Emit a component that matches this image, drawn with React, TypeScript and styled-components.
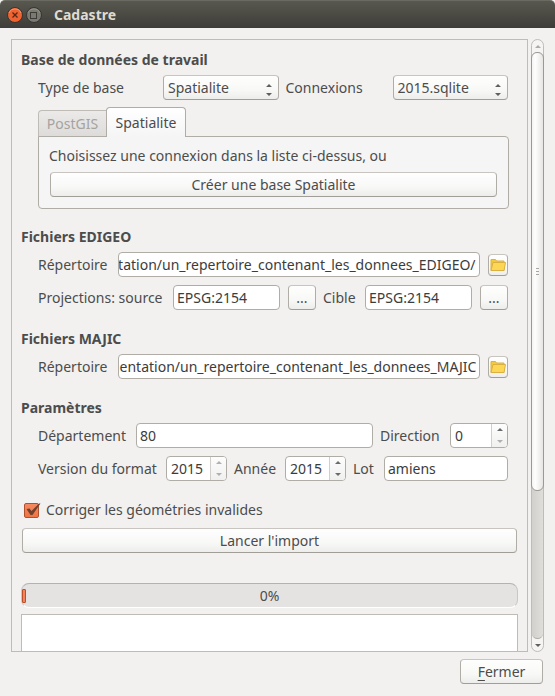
import React, { useEffect, useRef, useState } from "react";
import styled, { createGlobalStyle, css } from "styled-components";

const ink = "#4c4c4c";
const line = "#b0aca6";
const softLine = "#bfbcb8";

const GlobalStyle = createGlobalStyle`
  *, *::before, *::after { box-sizing: border-box; }
  body { margin: 0; background: #f2f1f0; }
  body, button, input, select, textarea {
    font-family: "Noto Sans", "Open Sans", sans-serif;
    font-size: 14px;
    line-height: 20px;
    color: ${ink};
  }
`;

const Window = styled.div`
  display: flex;
  flex-direction: column;
  height: 100vh;
  background: #f2f1f0;
`;

const TitleBar = styled.header`
  display: flex;
  align-items: center;
  flex: none;
  gap: 3px;
  height: 28px;
  padding: 0 7px;
  border-top: 1px solid #6b6a62;
  border-radius: 5px 5px 0 0;
  background: linear-gradient(#59584f, #3d3c38);
`;

const Title = styled.h1`
  margin: 0 0 0 9px;
  font-size: 14px;
  line-height: 20px;
  font-weight: 700;
  color: #dfdbd2;
`;

const WindowButton = styled.button`
  width: 16px;
  height: 16px;
  padding: 0;
  border: 0;
  background: none;
  svg { display: block; }
`;

const Body = styled.main`
  display: flex;
  flex: 1;
  min-height: 0;
  gap: 3px;
  padding: 11px 11px 0;
`;

const Pane = styled.div`
  flex: 1;
  min-width: 0;
  padding: 10px 9px 0;
  border: 1px solid ${softLine};
  overflow-y: auto;
  scrollbar-width: none;
`;

const Section = styled.section`
  margin-bottom: 19px;
`;

const Heading = styled.h2`
  margin: 0 0 5px;
  font-size: 14px;
  line-height: 20px;
  font-weight: 700;
`;

const Rows = styled.div`
  display: flex;
  flex-direction: column;
  gap: 8px;
  margin: 0 10px 0 17px;
`;

const Row = styled.div`
  display: flex;
  align-items: center;
  height: 25px;
`;

const Label = styled.label<{ $w: number; $gap?: boolean }>`
  flex: none;
  width: ${(p) => p.$w}px;
  margin-left: ${(p) => (p.$gap ? "7px" : "0")};
  white-space: nowrap;
`;

const field = css`
  height: 25px;
  min-width: 0;
  border: 1px solid ${line};
  border-radius: 4px;
  background: #fff;
  outline: none;
`;

const raised = css`
  border: 1px solid;
  border-color: #c8c4bf #b0aca6 #a19d97;
  border-radius: 4px;
  background: linear-gradient(#fefefe, #f8f8f7 60%, #ededec);
`;

const TextInput = styled.input<{ $end?: boolean }>`
  ${field}
  flex: 1;
  width: 0;
  padding: ${(p) => (p.$end ? "0 3px 0 0" : "0 3px")};
  margin-right: ${(p) => (p.$end ? "8px" : "0")};
  color: #3c3c3c;
`;

const Button = styled.button<{ $w?: number }>`
  ${raised}
  display: block;
  height: 25px;
  padding: 0;
  width: ${(p) => (p.$w ? `${p.$w}px` : "100%")};
  flex: none;
  line-height: 22px;
  white-space: nowrap;
  u { text-underline-offset: 3px; }
`;

const MoreButton = styled(Button)`
  width: 28px;
  margin: 0 7px 0 8px;
  &:last-child { margin-right: 0; }
`;

const FolderButton = styled(Button)`
  display: grid;
  place-items: center;
  width: 20px;
  height: 22px;
`;

const SelectBox = styled.div`
  position: relative;
  flex: 1;
  margin-right: 7px;
  &:last-child { margin-right: 0; }
  svg {
    position: absolute;
    right: 6px;
    top: 8px;
    pointer-events: none;
  }
`;

const Select = styled.select`
  ${raised}
  display: block;
  appearance: none;
  width: 100%;
  height: 25px;
  padding: 0 18px 0 4px;
  outline: none;
`;

const Tabs = styled.div`
  margin: 7px 9px -1px 17px;
`;

const TabList = styled.div`
  display: flex;
  align-items: flex-end;
  height: 30px;
  margin-bottom: -1px;
`;

const Tab = styled.button<{ $active?: boolean }>`
  position: relative;
  padding: 0;
  border: 1px solid ${line};
  ${(p) =>
    p.$active
      ? css`
          width: 80px;
          height: 30px;
          border-bottom: 0;
          border-radius: 4px 4px 0 0;
          background: linear-gradient(#ffffff, #f5f5f5);
        `
      : css`
          width: 69px;
          height: 27px;
          margin-right: -1px;
          border-color: ${softLine} ${softLine} ${line};
          border-radius: 4px 0 0 0;
          background: linear-gradient(#ebeae9, #dddcda);
          color: #a5a3a0;
        `}
`;

const TabPanel = styled.div`
  padding: 9px 11px 11px 10px;
  border: 1px solid ${line};
  border-radius: 0 4px 4px 4px;
  background: #f5f5f5;
`;

const Note = styled.p`
  margin: 0 0 6px;
`;

const SpinBox = styled.div<{ $w: number }>`
  ${field}
  display: flex;
  flex: none;
  width: ${(p) => p.$w}px;
  margin-right: 7px;
  overflow: hidden;
  &:last-child { margin-right: 0; }
`;

const SpinInput = styled.input`
  flex: 1;
  width: 0;
  min-width: 0;
  padding: 0 0 0 4px;
  border: 0;
  background: none;
  outline: none;
  color: #3c3c3c;
  appearance: textfield;
  &::-webkit-inner-spin-button { appearance: none; }
`;

const SpinButtons = styled.div`
  display: flex;
  flex-direction: column;
  width: 16px;
  border-left: 1px solid #d2cfcb;
  background: linear-gradient(#fdfdfd, #f0f0ef);
`;

const SpinButton = styled.button`
  display: grid;
  place-items: center;
  flex: 1;
  padding: 0;
  border: 0;
  background: none;
  color: #6a6a6a;
  &:disabled { color: #b0b0b0; }
`;

const CheckLabel = styled.label`
  display: flex;
  align-items: center;
  height: 20px;
  margin-bottom: 8px;
`;

const CheckMark = styled.span`
  position: relative;
  width: 25px;
  height: 16px;
  input {
    appearance: none;
    display: block;
    width: 15px;
    height: 15px;
    margin: 1px 0 0 3px;
    border: 1px solid #b0502e;
    border-radius: 2px;
    background: #fff;
  }
  input:checked { background: linear-gradient(#f58a60, #ee7442); }
  svg {
    position: absolute;
    left: 3px;
    top: 0;
    pointer-events: none;
  }
  input:not(:checked) + svg { display: none; }
`;

const Actions = styled.div<{ $after?: number }>`
  margin: 0 0 ${(p) => p.$after ?? 0}px 1px;
`;

const Launch = styled(Actions)`
  margin-right: 1px;
`;

const Progress = styled.div`
  display: grid;
  align-items: center;
  height: 25px;
  margin-bottom: 6px;
  border: 1px solid;
  border-color: #b5b2ae #c9c7c4 #fff;
  border-radius: 8px;
  background: #e4e3e2;
  > * { grid-area: 1 / 1; }
`;

const ProgressChunk = styled.span`
  width: 4px;
  height: 14px;
  border: 1px solid #bd4e28;
  border-radius: 1px;
  background: #f2835a;
`;

const ProgressText = styled.span`
  text-align: center;
`;

const Log = styled.textarea`
  display: block;
  width: 100%;
  height: 232px;
  padding: 4px;
  margin-bottom: 9px;
  border: 1px solid ${softLine};
  border-radius: 0;
  background: #fff;
  resize: none;
  outline: none;
`;

const ScrollBar = styled.div`
  display: flex;
  flex-direction: column;
  flex: none;
  width: 13px;
  border: 1px solid ${softLine};
  border-radius: 7px;
  background: #f5f4f3;
`;

const ScrollButton = styled.button`
  display: grid;
  place-items: center;
  width: 100%;
  height: 12px;
  padding: 0;
  border: 0;
  background: none;
  color: #5f5f5f;
  &:disabled { color: #aaa; }
`;

const Track = styled.div`
  flex: 1;
  min-height: 0;
  border-bottom: 1px solid ${line};
  border-radius: 6px;
  background: linear-gradient(90deg, #d2d0cd, #dfdedb);
`;

const Thumb = styled.div`
  display: grid;
  place-items: center;
  margin: 0 -1px;
  border: 1px solid #9c9994;
  border-radius: 6px;
  background: linear-gradient(90deg, #f4f4f3, #fefefe 30%, #e6e5e3);
`;

const Footer = styled.footer`
  display: flex;
  justify-content: flex-end;
  padding: 7px 12px 12px;
`;

function Arrow({ down = false }: { down?: boolean }) {
  return (
    <svg width="6" height="3" viewBox="0 0 6 3" aria-hidden="true">
      <path d={down ? "M0 0h6L3 3z" : "M0 3h6L3 0z"} fill="currentColor" />
    </svg>
  );
}

function FolderIcon() {
  return (
    <svg width="16" height="14" viewBox="0 0 16 14" aria-hidden="true">
      <path d="M1 12.5V1.5h4.500l1 1.500h7.500v9.500z" fill="#f3c93f" stroke="#dcb33c" />
      <path d="M3 4.500h12.500l-1.500 8H1z" fill="#fcd755" stroke="#dcb040" />
    </svg>
  );
}

function Dropdown({ id, options }: { id: string; options: string[] }) {
  return (
    <SelectBox>
      <Select id={id} defaultValue={options[0]}>
        {options.map((o) => (
          <option key={o}>{o}</option>
        ))}
      </Select>
      <svg width="8" height="13" viewBox="0 0 8 13" aria-hidden="true">
        <path d="M1 4h6L4 1zM1 10h6L4 13z" fill="#5f5f5f" />
      </svg>
    </SelectBox>
  );
}

function PathRow({ id, path }: { id: string; path: string }) {
  const ref = useRef<HTMLInputElement>(null);
  useEffect(() => {
    if (ref.current) ref.current.scrollLeft = ref.current.scrollWidth;
  }, []);
  return (
    <Row>
      <Label $w={80} htmlFor={id}>Répertoire</Label>
      <TextInput ref={ref} id={id} $end defaultValue={path} />
      <FolderButton type="button" aria-label="Parcourir">
        <FolderIcon />
      </FolderButton>
    </Row>
  );
}

interface SpinProps {
  id: string;
  width: number;
  initial: number;
  min: number;
  max: number;
}

function Spin({ id, width, initial, min, max }: SpinProps) {
  const [value, setValue] = useState(initial);
  return (
    <SpinBox $w={width}>
      <SpinInput
        id={id}
        type="number"
        min={min}
        max={max}
        value={value}
        onChange={(e) => setValue(Number(e.target.value))}
      />
      <SpinButtons>
        <SpinButton type="button" aria-label="Augmenter" disabled={value >= max} onClick={() => setValue(value + 1)}>
          <Arrow />
        </SpinButton>
        <SpinButton type="button" aria-label="Diminuer" disabled={value <= min} onClick={() => setValue(value - 1)}>
          <Arrow down />
        </SpinButton>
      </SpinButtons>
    </SpinBox>
  );
}

export default function App() {
  const pane = useRef<HTMLDivElement>(null);
  const [view, setView] = useState({ top: 0, size: 1 });

  const measure = () => {
    const el = pane.current;
    if (el) setView({ top: el.scrollTop / el.scrollHeight, size: el.clientHeight / el.scrollHeight });
  };

  useEffect(() => {
    measure();
    window.addEventListener("resize", measure);
    return () => window.removeEventListener("resize", measure);
  }, []);

  const scroll = (dy: number) => pane.current?.scrollBy(0, dy);

  return (
    <Window>
      <GlobalStyle />
      <TitleBar>
        <WindowButton type="button" aria-label="Fermer la fenêtre">
          <svg width="16" height="16" viewBox="0 0 16 16">
            <circle cx="8" cy="8" r="7.5" fill="#f0622f" stroke="#35342f" />
            <path d="M2 6a6.5 6.5 0 0 1 12 0" fill="none" stroke="#f8936c" />
            <path d="M5.5 5.5l5 5M10.5 5.5l-5 5" stroke="#51291a" strokeWidth="1.3" />
          </svg>
        </WindowButton>
        <WindowButton type="button" aria-label="Agrandir">
          <svg width="16" height="16" viewBox="0 0 16 16">
            <circle cx="8" cy="8" r="7.5" fill="#7b7a72" stroke="#35342f" />
            <path d="M2 6a6.5 6.5 0 0 1 12 0" fill="none" stroke="#94938a" />
            <rect x="4.5" y="5.5" width="6" height="6" fill="none" stroke="#3c3b36" />
          </svg>
        </WindowButton>
        <Title>Cadastre</Title>
      </TitleBar>

      <Body>
        <Pane ref={pane} onScroll={measure}>
          <Section>
            <Heading>Base de données de travail</Heading>
            <Rows>
              <Row>
                <Label $w={125} htmlFor="type">Type de base</Label>
                <Dropdown id="type" options={["Spatialite", "PostGIS"]} />
                <Label $w={107} htmlFor="connexion">Connexions</Label>
                <Dropdown id="connexion" options={["2015.sqlite"]} />
              </Row>
            </Rows>
            <Tabs>
              <TabList role="tablist">
                <Tab type="button" role="tab" aria-selected="false" disabled>PostGIS</Tab>
                <Tab type="button" role="tab" aria-selected="true" $active>Spatialite</Tab>
              </TabList>
              <TabPanel role="tabpanel">
                <Note>Choisissez une connexion dans la liste ci-dessus, ou</Note>
                <Actions>
                  <Button type="button">Créer une base Spatialite</Button>
                </Actions>
              </TabPanel>
            </Tabs>
          </Section>

          <Section>
            <Heading>Fichiers EDIGEO</Heading>
            <Rows>
              <PathRow id="edigeo" path="documentation/un_repertoire_contenant_les_donnees_EDIGEO/" />
              <Row>
                <Label $w={135} htmlFor="source">Projections: source</Label>
                <TextInput id="source" defaultValue="EPSG:2154" />
                <MoreButton type="button">...</MoreButton>
                <Label $w={42} htmlFor="cible">Cible</Label>
                <TextInput id="cible" defaultValue="EPSG:2154" />
                <MoreButton type="button">...</MoreButton>
              </Row>
            </Rows>
          </Section>

          <Section>
            <Heading>Fichiers MAJIC</Heading>
            <Rows>
              <PathRow id="majic" path="documentation/un_repertoire_contenant_les_donnees_MAJIC" />
            </Rows>
          </Section>

          <Section>
            <Heading>Paramètres</Heading>
            <Rows>
              <Row>
                <Label $w={98} htmlFor="departement">Département</Label>
                <TextInput id="departement" defaultValue="80" />
                <Label $w={70} $gap htmlFor="direction">Direction</Label>
                <Spin id="direction" width={58} initial={0} min={0} max={9} />
              </Row>
              <Row>
                <Label $w={128} htmlFor="version">Version du format</Label>
                <Spin id="version" width={61} initial={2015} min={2015} max={2015} />
                <Label $w={51} htmlFor="annee">Année</Label>
                <Spin id="annee" width={61} initial={2015} min={2000} max={2030} />
                <Label $w={31} htmlFor="lot">Lot</Label>
                <TextInput id="lot" defaultValue="amiens" />
              </Row>
            </Rows>
          </Section>

          <CheckLabel>
            <CheckMark>
              <input type="checkbox" defaultChecked />
              <svg width="17" height="16" viewBox="0 0 17 16" aria-hidden="true">
                <path d="M2.5 7L5.500 6.500 7.500 9 15 1.500h1.500L8.500 13H6.500z" fill="#74402c" />
              </svg>
            </CheckMark>
            Corriger les géométries invalides
          </CheckLabel>
          <Launch $after={30}>
            <Button type="button">Lancer l'import</Button>
          </Launch>
          <Progress role="progressbar" aria-label="Import" aria-valuenow={0} aria-valuemin={0} aria-valuemax={100}>
            <ProgressChunk />
            <ProgressText>0%</ProgressText>
          </Progress>
          <Log aria-label="Journal" readOnly />
        </Pane>

        <ScrollBar>
          <ScrollButton type="button" aria-label="Monter" disabled={view.top <= 0} onClick={() => scroll(-40)}>
            <Arrow />
          </ScrollButton>
          <Track>
            <Thumb style={{ height: `${view.size * 100}%`, transform: `translateY(${(view.top / view.size) * 100}%)` }}>
              <svg width="3" height="7" viewBox="0 0 3 7" aria-hidden="true">
                <path d="M0 .5h3M0 3.5h3M0 6.5h3" stroke="#aaa7a3" />
              </svg>
            </Thumb>
          </Track>
          <ScrollButton type="button" aria-label="Descendre" onClick={() => scroll(40)}>
            <Arrow down />
          </ScrollButton>
        </ScrollBar>
      </Body>

      <Footer>
        <Button type="button" $w={83}>
          <u>F</u>ermer
        </Button>
      </Footer>
    </Window>
  );
}
